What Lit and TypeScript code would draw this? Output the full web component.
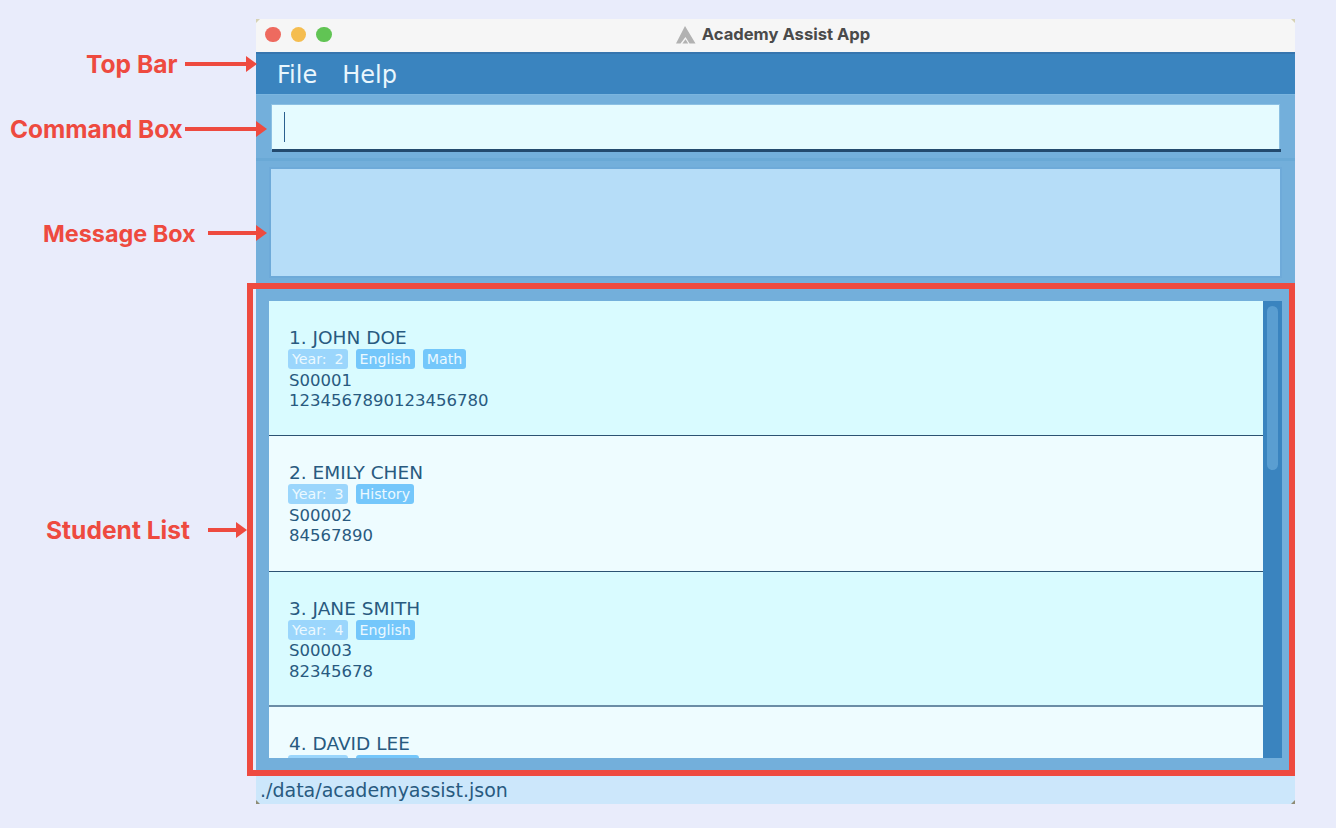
import { LitElement, html, css, svg } from 'lit';
import { customElement } from 'lit/decorators.js';

interface Student {
  name: string;
  tags: string[];
  id: string;
  phone: string;
}

const STUDENTS: Student[] = [
  { name: '1. JOHN DOE', tags: ['Year: 2', 'English', 'Math'], id: 'S00001', phone: '1234567890123456780' },
  { name: '2. EMILY CHEN', tags: ['Year: 3', 'History'], id: 'S00002', phone: '84567890' },
  { name: '3. JANE SMITH', tags: ['Year: 4', 'English'], id: 'S00003', phone: '82345678' },
  { name: '4. DAVID LEE', tags: ['Year: 1', 'Science'], id: 'S00004', phone: '91234567' },
];

// label text, text left/top/size, arrow start, arrow end, y centre
const NOTES = [
  { text: 'Top Bar', left: 86, top: 50, size: 24.6, x1: 185, x2: 257, y: 64 },
  { text: 'Command Box', left: 10, top: 115, size: 24.4, x1: 185, x2: 267, y: 129 },
  { text: 'Message Box', left: 43, top: 220, size: 23.4, x1: 208, x2: 267, y: 233 },
  { text: 'Student List', left: 46, top: 516, size: 24.6, x1: 208, x2: 247, y: 530 },
];

@customElement('app-root')
export class AppRoot extends LitElement {
  static styles = css`
    :host {
      display: block;
      position: relative;
      width: 1336px;
      height: 828px;
      overflow: hidden;
      background: #e9ecfb;
      font-family: 'DejaVu Sans', sans-serif;
    }
    .stage {
      padding: 19px 41px 24px 256px;
      height: 100%;
      box-sizing: border-box;
    }
    .window {
      position: relative;
      height: 785px;
      display: flex;
      flex-direction: column;
      background: #73afdb;
    }
    .corner {
      position: absolute;
      width: 4px;
      height: 4px;
    }
    .corner.tl { left: 0; top: 0; background: #d6d2b4; clip-path: polygon(0 0, 100% 0, 0 100%); }
    .corner.tr { right: 0; top: 0; background: #d6d2b4; clip-path: polygon(0 0, 100% 0, 100% 100%); }
    .corner.bl { left: 0; bottom: 0; background: #8f8c74; clip-path: polygon(0 0, 100% 100%, 0 100%); }
    .corner.br { right: 0; bottom: 0; background: #8f8c74; clip-path: polygon(100% 0, 100% 100%, 0 100%); }
    .titlebar {
      height: 33px;
      flex: none;
      position: relative;
      display: flex;
      align-items: center;
      justify-content: center;
      gap: 6px;
      padding: 0 5px 4px 0;
      box-sizing: border-box;
      background: #f6f6f6;
    }
    .lights {
      position: absolute;
      left: 9px;
      top: 7.5px;
      display: flex;
      gap: 10px;
    }
    .light {
      width: 15.7px;
      height: 15.7px;
      border-radius: 50%;
    }
    .red { background: #ee6a5f; }
    .yellow { background: #f5bd4f; }
    .green { background: #61c454; }
    .title {
      font-family: 'Inter', sans-serif;
      font-weight: 700;
      font-size: 16.6px;
      color: #4a4a4a;
    }
    .logo {
      width: 20px;
      height: 18px;
      display: block;
      margin-top: 2px;
    }
    .menu {
      height: 42px;
      flex: none;
      box-sizing: border-box;
      display: flex;
      align-items: center;
      gap: 25px;
      padding: 2px 0 0 21px;
      background: #3a84bf;
      border-top: 2px solid #3675ae;
      color: #e9f6fd;
      font-size: 24px;
    }
    .command {
      height: 64px;
      flex: none;
      box-sizing: border-box;
      padding: 9px 14px 0 15px;
      border-top: 1px solid #7ab5df;
    }
    .input {
      height: 46px;
      box-sizing: border-box;
      width: 1009px;
      background: #e5fbff;
      border: 1px solid #8cc0e3;
      border-bottom: none;
      padding: 7px 0 0 12px;
      position: relative;
    }
    .input::after {
      content: '';
      position: absolute;
      left: 0;
      right: -2px;
      bottom: -2px;
      height: 3px;
      background: #234a6e;
    }
    .caret {
      width: 1px;
      height: 30px;
      background: #2a5f8f;
    }
    .message-pane {
      height: 125px;
      flex: none;
      box-sizing: border-box;
      padding: 6px 13px 0 13px;
      border-top: 3px solid #6aa9d6;
    }
    .message {
      height: 111px;
      box-sizing: border-box;
      background: #b6ddf8;
      border: 2px solid #6eaad9;
    }
    .list-pane {
      flex: 1;
      min-height: 0;
      box-sizing: border-box;
      padding: 18px 13px 18px 13px;
      display: flex;
    }
    .list {
      flex: 1;
      min-width: 0;
      overflow: hidden;
    }
    .card {
      height: 135.3px;
      box-sizing: border-box;
      padding: 26px 0 0 20px;
      border-bottom: 1px solid #2c5273;
      color: #285a80;
      background: #d9fbff;
      font-size: 16.5px;
      line-height: 20.5px;
    }
    .card:nth-child(even) {
      background: #eefcff;
    }
    .card:nth-child(3) {
      border-bottom: 2px solid #6b8da6;
    }
    .name {
      font-size: 18.5px;
      line-height: 22px;
    }
    .tags {
      display: flex;
      gap: 8px;
      height: 20px;
      margin: 0 0 1.5px -1px;
    }
    .tag {
      height: 20px;
      box-sizing: border-box;
      padding: 0 4px;
      border-radius: 3px;
      background: #74c7fb;
      color: #ebf9ff;
      font-size: 14.2px;
      line-height: 20px;
      word-spacing: 3.5px;
    }
    .tag.year {
      background: #9bd6fc;
    }
    .scrollbar {
      width: 19px;
      flex: none;
      box-sizing: border-box;
      background: #3a84bf;
      padding: 5px 4px 0 4px;
    }
    .thumb {
      height: 164px;
      border-radius: 6px;
      background: #5a9ed1;
    }
    .status {
      height: 28px;
      flex: none;
      box-sizing: border-box;
      padding-left: 4px;
      background: #cce7fb;
      color: #285a80;
      font-size: 19px;
      line-height: 28px;
    }

    /* annotations drawn on top of the screenshot */
    .frame {
      position: absolute;
      left: 247px;
      top: 283px;
      width: 1048px;
      height: 493px;
      box-sizing: border-box;
      border: 6px solid #ee4a3f;
    }
    .note {
      position: absolute;
      font-family: 'Inter', sans-serif;
      font-weight: 700;
      line-height: 28px;
      color: #ee4a3f;
      white-space: nowrap;
    }
    .arrows {
      position: absolute;
      inset: 0;
      width: 1336px;
      height: 828px;
      pointer-events: none;
    }
  `;

  private arrow(x1: number, x2: number, y: number) {
    return svg`
      <rect x=${x1} y=${y - 2} width=${x2 - x1 - 10} height="4" fill="#ee4a3f"></rect>
      <polygon points="${x2 - 11},${y - 8} ${x2},${y} ${x2 - 11},${y + 8}" fill="#ee4a3f"></polygon>
    `;
  }

  render() {
    return html`
      <div class="stage">
        <div class="window">
          <div class="titlebar">
            <div class="lights">
              <span class="light red"></span>
              <span class="light yellow"></span>
              <span class="light green"></span>
            </div>
            <svg class="logo" viewBox="0 0 20 18">
              <path d="M9 0 L19.5 17.5 L13.5 17.5 L9.5 11 L4.5 17.5 L0 17.5 Z" fill="#b2b2b2"></path>
              <path d="M9.5 13.2 L12.2 17.5 L6.4 17.5 Z" fill="#b2b2b2"></path>
            </svg>
            <span class="title">Academy Assist App</span>
          </div>
          <div class="menu"><span>File</span><span>Help</span></div>
          <div class="command">
            <div class="input"><div class="caret"></div></div>
          </div>
          <div class="message-pane"><div class="message"></div></div>
          <div class="list-pane">
            <div class="list">
              ${STUDENTS.map(
                (s) => html`
                  <div class="card">
                    <div class="name">${s.name}</div>
                    <div class="tags">
                      ${s.tags.map(
                        (t, i) => html`<span class="tag ${i === 0 ? 'year' : ''}">${t}</span>`
                      )}
                    </div>
                    <div>${s.id}</div>
                    <div>${s.phone}</div>
                  </div>
                `
              )}
            </div>
            <div class="scrollbar"><div class="thumb"></div></div>
          </div>
          <div class="status">./data/academyassist.json</div>
          <span class="corner tl"></span>
          <span class="corner tr"></span>
          <span class="corner bl"></span>
          <span class="corner br"></span>
        </div>
      </div>
      <div class="frame"></div>
      ${NOTES.map(
        (n) =>
          html`<div class="note" style="left:${n.left}px;top:${n.top}px;font-size:${n.size}px">${n.text}</div>`
      )}
      <svg class="arrows" viewBox="0 0 1336 828">
        ${NOTES.map((n) => this.arrow(n.x1, n.x2, n.y))}
      </svg>
    `;
  }
}
